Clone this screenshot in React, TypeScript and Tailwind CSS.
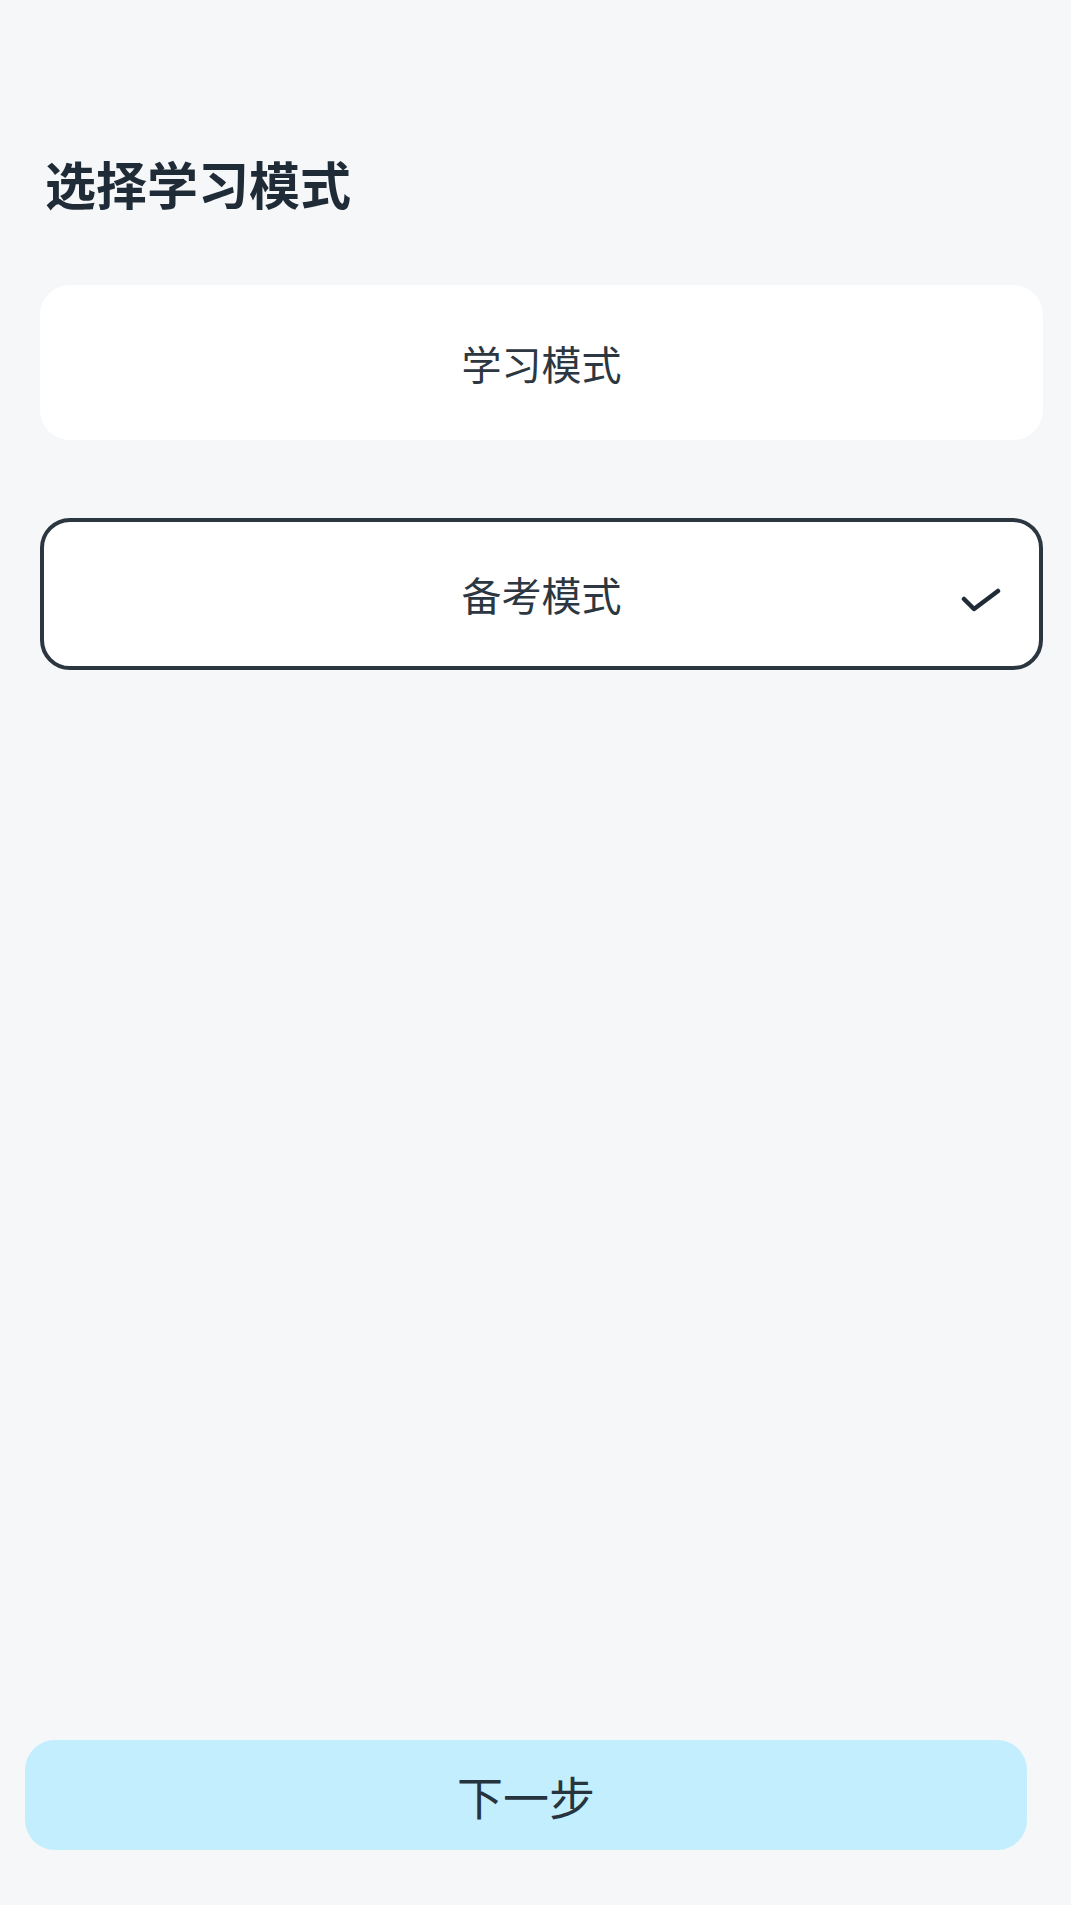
import { useState } from "react";

const modes = [
  { id: "study", label: "学习模式" },
  { id: "exam", label: "备考模式" },
];

function Check() {
  return (
    <svg width="40" height="28" viewBox="0 0 40 28" fill="none">
      <path d="M3 13 L13 23 L37 5" stroke="#1f2b36" strokeWidth="4.5" strokeLinecap="round" strokeLinejoin="round" />
    </svg>
  );
}

export default function App() {
  const [selected, setSelected] = useState("exam");

  return (
    <div
      className="h-[1905px] bg-[#f6f7f9] flex flex-col text-[#25313c]"
      style={{ fontFamily: '"Noto Sans CJK SC", "Noto Sans", sans-serif' }}
    >
      {/* Header */}
      <h1 className="pt-[157px] pl-[45px] text-[51px] leading-[52px] font-semibold text-[#1f2b36]">
        选择学习模式
      </h1>

      {/* Options */}
      <div className="mt-[76px] ml-[40px] mr-[28px] flex flex-col gap-[78px]">
        {modes.map((m) => {
          const active = selected === m.id;
          return (
            <button
              key={m.id}
              onClick={() => setSelected(m.id)}
              className={
                active
                  ? "relative h-[152px] rounded-[30px] bg-white border-[4px] border-[#2b3640] flex items-center justify-center"
                  : "relative h-[155px] rounded-[30px] bg-white border-[4px] border-transparent flex items-center justify-center"
              }
            >
              <span className="text-[40px] leading-none font-normal text-[#2c3741]">{m.label}</span>
              {active && (
                <span className="absolute right-[38px] top-[64px]">
                  <Check />
                </span>
              )}
            </button>
          );
        })}
      </div>

      <div className="flex-1" />

      {/* Footer */}
      <div className="pl-[25px] pr-[44px] pb-[55px]">
        <button className="w-full h-[110px] rounded-[30px] bg-[#c2eefd] flex items-center justify-center">
          <span className="text-[46px] leading-none font-normal text-[#27343e]">下一步</span>
        </button>
      </div>
    </div>
  );
}
